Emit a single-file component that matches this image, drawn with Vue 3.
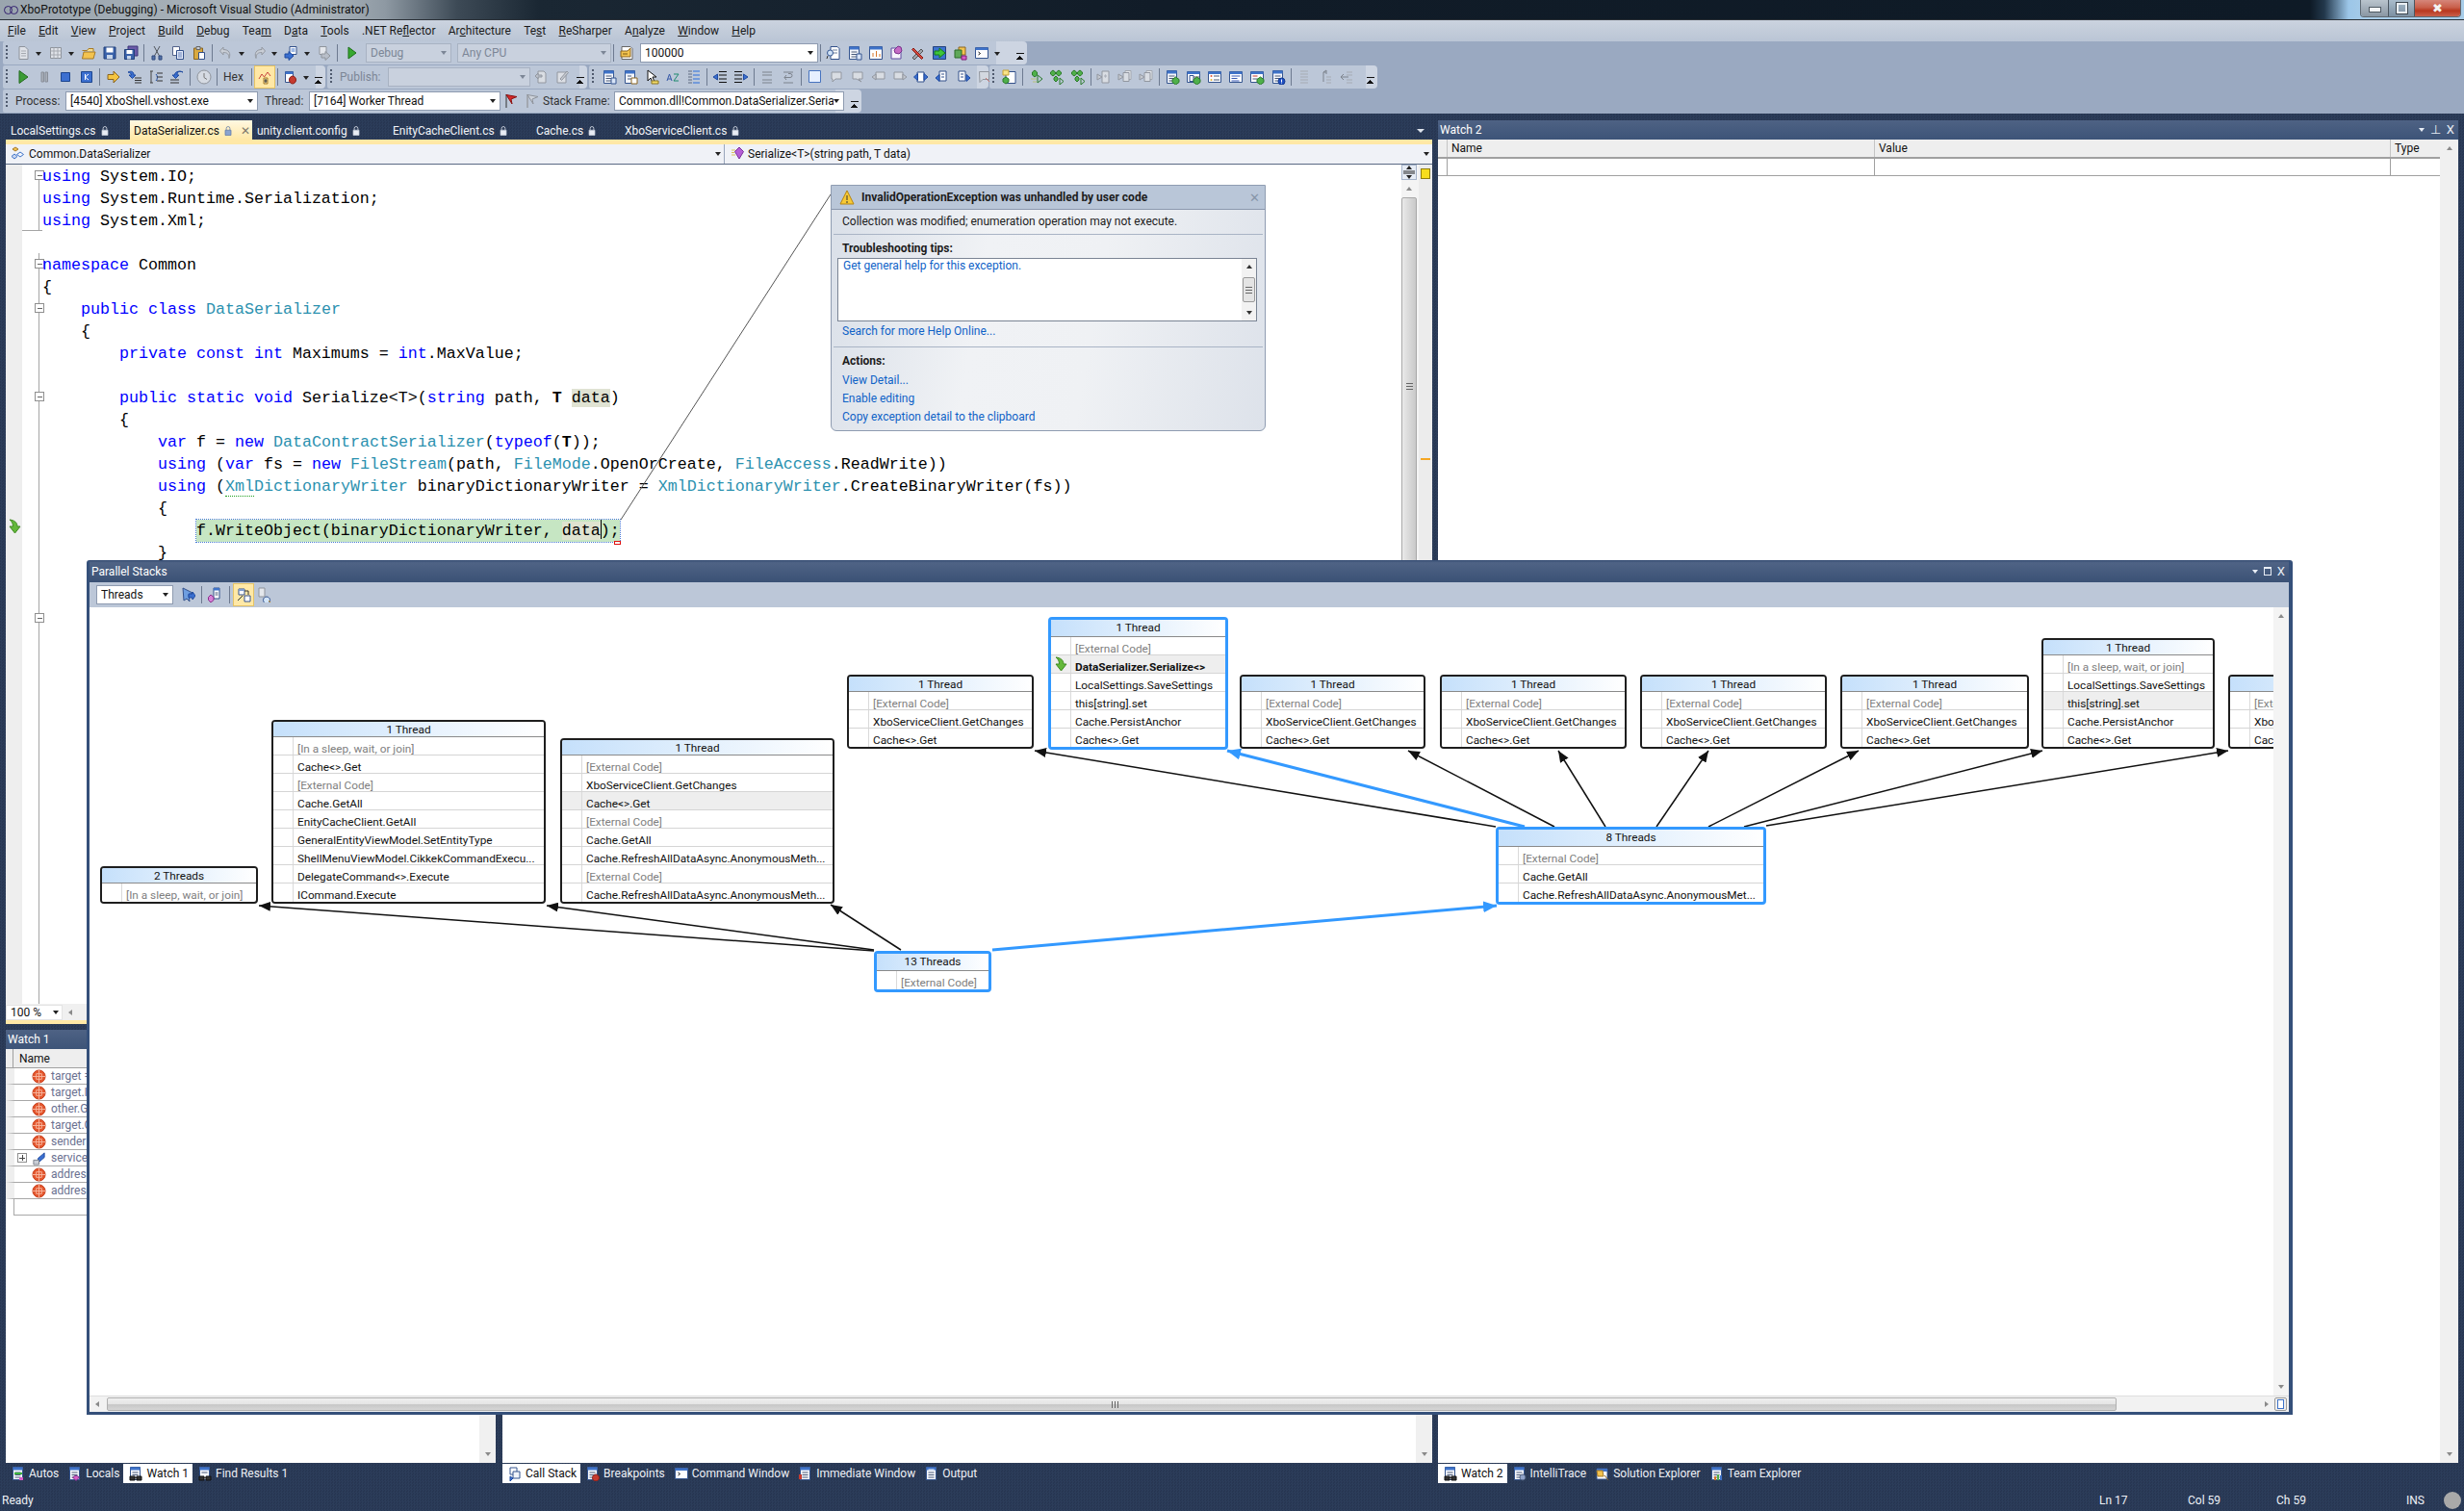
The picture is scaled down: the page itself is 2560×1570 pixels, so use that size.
<script setup>
import { h } from 'vue';

// tiny icon drawing: every icon is a list of [d, fill, stroke]
const list = [
    ['M2.5 1.5h10v13h-10z', '#f4f6fb', '#35558f'],
    ['M2.5 1.5h10v3h-10z', '#3f73c9'],
    ['M4.5 7h6M4.5 9.5h6M4.5 12h6', 'none', '#4a5a78'],
];
const windowBase = [
    ['M1.5 2.5h13v11h-13z', '#fdfdff', '#35558f'],
    ['M1.5 2.5h13v2.5h-13z', '#3f73c9'],
];
const gem = [['M11.5 8l3.5 2.5v3L11.5 16 8 13.5v-3z', '#4fb04a', '#2c7a2a']];
const ball = 'M8 1a7 7 0 1 0 0 14a7 7 0 1 0 0-14z';
const binoculars = [['M2 11h5v4H2zM9 11h5v4H9z', '#333', '#111'], ['M7 12h2v1H7z', '#333']];

const icons = {
    newproj: [['M4 1.5h6l3 3v10H4z', '#dfe2e8', '#8f949c'], ['M6 6h5M6 8.5h5M6 11h5', 'none', '#a5a9b0']],
    additem: [['M2.5 2.5h11v11h-11z', '#dfe2e8', '#8f949c'], ['M2.5 6h11M2.5 10h11M6 2.5v11M10 2.5v11', 'none', '#a5a9b0']],
    open: [['M1.5 5.5h5l1.5-2h5v3', '#f7dd8a', '#a67a26'], ['M1.5 14l1.5-7h12l-2 7z', '#f3c34f', '#a67a26']],
    save: [['M2 2h12v12H2z', '#3a62aa', '#23407a'], ['M4.5 2.5h7v5h-7z', '#fff'], ['M5 10h6v4H5z', '#c8d6ea']],
    saveall: [['M5 1h10v10H5z', '#6a5aa8', '#3d3478'], ['M1.5 4.5h10v10h-10z', '#3a62aa', '#23407a'], ['M3.5 5h6v4h-6z', '#fff'], ['M4 11h4v3.5H4z', '#c8d6ea']],
    cut: [['M5 1l5.5 10M11 1L5.5 11', 'none', '#50555c'], ['M3 11h3v4H3zM10 11h3v4h-3z', '#5574ab', '#2d477a']],
    copy: [['M2.5 1.5h7v9h-7z', '#fff', '#52628a'], ['M6.5 5.5h7v9h-7z', '#e7eefc', '#33508a'], ['M8 8h4M8 10h4M8 12h4', 'none', '#5e7bb5']],
    paste: [['M2.5 3h9v11.5h-9z', '#d9a940', '#8a6420'], ['M5 1.5h4v3H5z', '#c7ccd4', '#666'], ['M7.5 7.5h6v7h-6z', '#fff', '#33508a']],
    undo: [['M5 2L1.5 6 5 10V7.5c4 0 6 1.5 6 6 2-5 0-9-6-9z', '#c9ced6', '#9398a1']],
    redo: [['M11 2l3.5 4L11 10V7.5c-4 0-6 1.5-6 6-2-5 0-9 6-9z', '#c9ced6', '#9398a1']],
    nav: [['M6 1.5h7v8H6z', '#fff', '#33508a'], ['M7.5 4h4M7.5 6h4', 'none', '#3f73c9'], ['M1 9h4V6.5l5 4.5-5 4.5V13H1z', '#3a6fd0', '#1f4aa0']],
    navfwd: [['M3 1.5h7v8H3z', '#e4e7ec', '#8f949c'], ['M5 9h4V6.5l5 4.5-5 4.5V13H5z', '#b9bfc9', '#8f949c']],
    play: [['M4 1.5l9 6.5-9 6.5z', '#3c9c36', '#246a20']],
    playg: [['M5 2l8 6-8 6z', '#36a82f', '#1d6f18']],
    pause: [['M5 3h2.5v10H5zM9 3h2.5v10H9z', '#a9afb9', '#888e98']],
    stop: [['M3.5 3.5h9v9h-9z', '#3c6fd0', '#1c458f']],
    restart: [['M2.5 2.5h11v11h-11z', '#3c6fd0', '#1c458f'], ['M10 5L6.5 8 10 11M6.5 5v6', 'none', '#fff']],
    shownext: [['M2 5.5h6V2l6 6-6 6v-3.5H2z', '#f5c542', '#8a6420']],
    stepin: [['M1 3c4-2 6 0 6 3h2L5.5 9.5 2 6h2.5C4.5 4.5 3 3.5 1 3z', '#3a6fd0', '#1f4aa0'], ['M8 9h7M8 11.5h7M8 14h7', 'none', '#333']],
    stepover: [['M3 2v12M2 2h3M2 14h3', 'none', '#444'], ['M8 5a5 5 0 0 1 0 7', 'none', '#1f4aa0'], ['M9 4h6M9 8h6M9 12h6', 'none', '#333']],
    stepout: [['M14 3c-4-2-6 0-6 3h2L6.5 9.5 3 6h2.5C5.5 3 9 1 14 3z', '#3a6fd0', '#1f4aa0'], ['M1 11h9M1 14h9', 'none', '#333']],
    clock: [[ball, '#d6dbe3', '#8f949c'], ['M8 4v4.5l3 2', 'none', '#777']],
    hexvis: [['M2 10l3-5 2.5 3L11 3l3 4', 'none', '#c9473f'], ['M7 9h4v6H7z', '#e7d9a8', '#a67a26'], ['M9 10v4M7.5 12h3', 'none', '#333']],
    bps: [['M2.5 2.5h8v11h-8z', '#fff', '#33508a'], ['M2.5 2.5h8v2.5h-8z', '#3f73c9'], ['M10 7a3.5 4 0 1 0 0.01 0z', '#c63a2f', '#8a1f18']],
    pubsync: [['M5 2h6l2 2v10H5z', '#d9dde3', '#9297a0'], ['M2 7l3-3v2h4v2H5v2z', '#b9bfc9', '#9297a0']],
    pubcheck: [['M3 3h9v11H3z', '#dcdfe5', '#9297a0'], ['M6 10l7-8 1.5 1.5-7 8z', '#c4c8cf', '#9297a0']],
    attr: [...list, ['M10 9h5v6h-5z', '#d8e4f7', '#35558f']],
    gear: [...list.slice(0, 2), ['M5 7h4M5 10h4', 'none', '#4a5a78'], ['M9 9h6v6H9z', '#ffffff', '#8a6420']],
    cursor: [['M4 1v11l3-3 2 5 2-1-2-5h4z', '#fff', '#111'], ['M8 12h7v3H8z', '#f3dc6a', '#8a7420']],
    az: [['M2 12l2.5-7L7 12M3 10h3', 'none', '#3558a8'], ['M9 5h5l-5 7h5', 'none', '#1e8a6f']],
    indent: [['M2 2h4M2 5h4M2 8h4M2 11h4M2 14h4', 'none', '#5f6b80'], ['M7 2h7M7 6h7M7 10h7M7 14h7', 'none', '#2a6fdc']],
    outdent: [['M7 2.5h8M7 6h8M7 10h8M7 13.5h8', 'none', '#111'], ['M5.5 5L1 8l4.5 3z', '#3a6fd0', '#1f4aa0']],
    outdent2: [['M1 2.5h8M1 6h8M1 10h8M1 13.5h8', 'none', '#111'], ['M10.5 5L15 8l-4.5 3z', '#3a6fd0', '#1f4aa0']],
    lines: [['M3 3h10M3 6h10M3 11h10M3 14h10', 'none', '#7d838d']],
    undoline: [['M3 3h10M3 14h10', 'none', '#7d838d'], ['M6 6l-2 2.5 2 2.5M4 8.5h6a2 2 0 0 0 0-4H8', 'none', '#7d838d']],
    bubble: [['M1.5 1.5h12v12h-12z', '#e7f0ff', '#4773bf']],
    bub1: [['M3 3h10v7H7l-3 3v-3H3z', '#d9dde3', '#9297a0']],
    bub2: [['M3 3h10v7H9l3 3-5-3H3z', '#d9dde3', '#9297a0']],
    bub3: [['M5 3h9v7H5z', '#d9dde3', '#9297a0'], ['M1 8l4-3v6z', '#c4c8cf', '#9297a0']],
    bub4: [['M2 3h9v7H2z', '#d9dde3', '#9297a0'], ['M15 8l-4-3v6z', '#c4c8cf', '#9297a0']],
    bluebm: [['M4 3h7v10H4z', '#fff', '#33508a'], ['M0.5 8l4-3.5v7z', '#3a6fd0', '#1f4aa0'], ['M15 8l-4-3.5v7z', '#3a6fd0', '#1f4aa0']],
    bm1: [['M5 2h7v10H5z', '#fff', '#33508a'], ['M1 9l4-3.5v7z', '#3a6fd0', '#1f4aa0'], ['M7 5h3M7 8h3', 'none', '#33508a']],
    bm2: [['M3 2h7v10H3z', '#fff', '#33508a'], ['M15 9l-4-3.5v7z', '#3a6fd0', '#1f4aa0'], ['M5 5h3M5 8h3', 'none', '#33508a']],
    nobm: [['M2.5 2.5h10v8H6l-3 3z', '#d3d8e0', '#92979f'], ['M9 9l5 5', 'none', '#c2736e']],
    findin: [['M5 1.5h7l2 2v11H5z', '#fff', '#33508a'], ['M7 5h5M7 8h5', 'none', '#6c7e9c'], ['M1.5 8a3 3 0 1 0 6 0a3 3 0 1 0-6 0', '#cfe2f7', '#35558f'], ['M2 11l-1 3', 'none', '#333']],
    props: [['M3 1.5h9l2 2v11H3z', '#fff', '#666'], ['M2 6h7L12 3v9H2z', '#f3c34f', '#8a6420'], ['M4 9h5', 'none', '#7a5a15']],
    toolwin: [['M1.5 1.5h13v13h-13z', '#fff', '#33508a'], ['M1.5 1.5h13v3h-13z', '#3f73c9'], ['M5 12V8M8.5 12V6M12 12V9', 'none', '#d6772b']],
    extmgr: [['M2 3h10v11H2z', '#f7f4fb', '#5f4ba0'], ['M9 1l3 1 1 4-3 3-4-1-1-3z', '#c56bc5', '#7a2f8a']],
    tools: [['M2 13L11 4l2 2-9 9z', '#a0a5ad', '#555'], ['M3 3l10 10-1.5 1.5L1.5 4.5z', '#d24a3f', '#8a1f18']],
    run: [['M1.5 1.5h13v13h-13z', '#3d74d0', '#23407a'], ['M3 6h5V3l6 5-6 5v-3H3z', '#3ec63a', '#1a7a18']],
    archi: [['M6 2h7v8H6z', '#f3c34f', '#8a6420'], ['M2 5h7v8H2z', '#5fa85a', '#2c6a28'], ['M9 11h5v4H9z', '#d65bc7', '#7a1f6f']],
    cmd: [...windowBase, ['M4.5 7l2 1.5-2 1.5', 'none', '#111']],
    flagred: [['M3 1v14', 'none', '#333'], ['M3 1.5l11 2-6 2.5 1 5z', '#d62828', '#8a1212']],
    flaggray: [['M3 1v14', 'none', '#888'], ['M3 1.5l11 2-6 2.5 1 5z', '#cdd2da', '#8f949c']],
    gemdoc: [['M4 2.5h10v12H4z', '#fff', '#33508a'], ['M1 1h6v5H1z', '#f8e488', '#c8a232'], ['M4 8l3 2v3l-3 2-3-2v-3z', '#4fb04a', '#2c7a2a']],
    tree1: [['M7 1l2.5 2v3L7 8 4.5 6V3z', '#4fb04a', '#2c7a2a'], ['M3 10h6M5 13h4', 'none', '#b8c07a'], ['M10 6l5 4-5 4z', 'none', '#2a7a2a']],
    tree2: [['M4 1l2.5 2v2L4 7 1.5 5V3zM10 1l2.5 2v2L10 7 7.5 5V3z', '#4fb04a', '#2c7a2a'], ['M7 7l2 2v2l-2 2-2-2V9z', '#4fb04a', '#2c7a2a'], ['M11 9l4 3.5L11 16z', 'none', '#2a7a2a']],
    disdoc: [['M6 2h7v12H6z', '#d9dde3', '#9297a0'], ['M1 5l5 3-5 3z', '#c4c8cf', '#9297a0'], ['M9.5 5l1.5 2-1.5 2-1.5-2z', '#aeb3bc']],
    disdocs: [['M8 1.5h6v9H8z', '#e2e5ea', '#a3a8b0'], ['M6 3.5h6v9H6z', '#d9dde3', '#9297a0'], ['M1 5l5 3-5 3z', '#c4c8cf', '#9297a0']],
    wingem: [...list, ...gem],
    wingem2: [...windowBase, ['M4 6.5h4v6H4z', 'none', '#35558f'], ['M8 8h6', 'none', '#555'], ...gem],
    winlist: [...windowBase, ['M3.5 7a1 1 0 1 0 2 0a1 1 0 1 0-2 0', '#e05a3a'], ['M3.5 11a1 1 0 1 0 2 0a1 1 0 1 0-2 0', '#e3b136'], ['M7 7h6M7 11h6', 'none', '#4a5a78']],
    winlines: [...windowBase, ['M3.5 7h9M3.5 9.5h6M3.5 12h8', 'none', '#3b5bb5']],
    winred: [...windowBase, ['M3.5 7h5', 'none', '#c63a2f'], ['M3.5 10h5', 'none', '#4a5a78'], ...gem],
    wininfo: [...list, ['M11.5 9a3.5 3.5 0 1 0 0 7a3.5 3.5 0 1 0 0-7z', '#1f4fc2', '#123a90'], ['M11.5 10.5v3M11.5 14.5v.5', 'none', '#fff']],
    fade1: [['M4 2h8M4 5h8M4 8h8M4 11h8M4 14h8', 'none', '#a6abb3']],
    fade2: [['M6 13V3h3M6 3l3-2v4', 'none', '#7d838d'], ['M9 8h5M9 11h5M9 14h5', 'none', '#a6abb3']],
    fade3: [['M2 8h8M5 5L2 8l3 3', 'none', '#7d838d'], ['M8 3h6M8 6h6M8 11h6M8 14h6', 'none', '#a6abb3']],
    lock: [['M5.5 7V4.5a2.5 2.5 0 0 1 5 0V7', 'none', '#e8ecf4'], ['M4 7h8v7H4z', '#e8ecf4', '#c2c9d6']],
    lockact: [['M5.5 7V4.5a2.5 2.5 0 0 1 5 0V7', 'none', '#5f7aa8'], ['M4 7h8v7H4z', '#8aa3cf', '#5f7aa8']],
    cls: [['M5 1l3 2-3 2-3-2z', '#f3c34f', '#a67a26'], ['M10 6l3.5 2.5L10 11 6.5 8.5z', '#f4f6fb', '#3f73c9'], ['M4 8l3 2.5L4 13 1 10.5z', '#c9d6ef', '#3f73c9']],
    method: [['M2 4h4M2 6.5h3M2 9h4', 'none', '#d9c25a'], ['M10 1l4.5 4.5L10 13 5.5 5.5z', '#b55ed6', '#7a2f9a']],
    arrow: [['M3 1c5 0.5 8 3 8 7h3l-5.5 7L3 8h3.5C6.5 5 5.5 3 3 1z', '#63b83a', '#3f8a22']],
    warn: [['M8 1l7 14H1z', '#f7c935', '#b58410'], ['M8 6v5M8 12v2', 'none', '#333']],
    err: [[ball, '#e4572e', '#c8401e'], ['M5 5h6v6H5zM8 1v14M1 8h14', 'none', '#f8b8a0']],
    service: [['M7 8l7-6v5l-7 6z', '#3a6fd0', '#1f4aa0'], ['M2 10h6v5H2z', '#c9ced6', '#7d838d']],
    filterflag: [['M3 1l10 5-4 2 1 7-3-3-3 2z', '#6e9ee0', '#33508a'], ['M9 7h4V5l3 4-3 4v-2H9z', '#3a6fd0', '#1f4aa0']],
    stackdoc: [['M6 1h6v11H6z', '#fff', '#33508a'], ['M6 1h6v2.5H6z', '#3f73c9'], ['M7.5 6h3M7.5 8h3', 'none', '#4a5a78'], ['M3 8l3 2.5v3L3 16l-2.5-2.5v-3z', '#d67fd6', '#8a2f8a']],
    method2: [['M3 2h6v6H3z', '#fff', '#33508a'], ['M3 2h6v2H3z', '#7f9dd0'], ['M9 9h6v6H9z', '#fff', '#33508a'], ['M9 4l4 0v4M2 14l5-5', 'none', '#333']],
    zoomfit: [['M2 1h6v9H2z', '#e4e7ec', '#8f949c'], ['M10 10a3.5 3.5 0 1 0 0.01 0z', '#d2e4f7', '#35558f'], ['M12 14l2 2', 'none', '#c28a2c']],
    autos: [...list, ['M4 7h8v2H4z', '#3cb53c'], ['M9 12h4v3H9z', '#d65bc7']],
    locals: [...list, ['M9 10l3.5 2-3.5 3.5L5.5 12z', '#d65bc7', '#7a2f8a']],
    watch: [...list, ...binoculars],
    findres: [...list.slice(0, 2), ['M4.5 7h6', 'none', '#4a5a78'], ...binoculars],
    callstack: [['M3 2h7v7H3z', '#fff', '#35558f'], ['M6 6h7v7H6z', '#f0f3f9', '#35558f'], ['M3 11l3 2-3 3z', '#3a6fd0', '#1f4aa0']],
    breakpoints: [...list, ['M11 9a3.5 3.5 0 1 0 0.01 0z', '#c63a2f', '#8a1f18']],
    immediate: [...list, ['M1 9h3v5H1z', '#c63a2f']],
    output: [...list, ['M4.5 4h6', 'none', '#fff']],
    intelli: [...list, ['M11 9a3 3 0 1 0 0.01 0z', '#8fa2c8', '#4a5a78']],
    solution: [['M2 3h11v11H2z', '#fff', '#35558f'], ['M2 3h11v3H2z', '#3f73c9'], ['M2 5h6l1 6H3z', '#f3c34f', '#a67a26'], ['M10 10l4 5', 'none', '#8a6420']],
    team: [...list, ['M5 11h2v4H5z', '#d6772b'], ['M8 9h2v6H8z', '#4fb04a'], ['M11 10h2v5h-2z', '#3f73c9']],
};

const Ico = ({ name }) => h('svg', { viewBox: '0 0 16 16', width: 16, height: 16 },
    (icons[name] || []).map(p => h('path', { d: p[0], fill: p[1] || 'none', stroke: p[2] || 'none' })));
Ico.props = ['name'];

const combo = (text, width, off) => ({ kind: 'combo', text, width, off });
const label = (text, width, off) => ({ kind: 'label', text, width, off });
const strip = s => s.split(' ');

const toolbarRows = [
    [{ width: 1064, items: [
        ...strip('newproj a additem a open save saveall | cut copy paste || undo a redo a nav a navfwd || playg'),
        { kind: 'gap', width: 4 }, combo('Debug', 89, true), { kind: 'gap', width: 6 }, combo('Any CPU', 160, true),
        ...strip('| props'), { kind: 'gap', width: 3 }, combo('100000', 185), ...strip('| findin attr toolwin extmgr tools run archi cmd a chev'),
    ] }],
    [
        { width: 335, items: [...strip('play pause stop restart || shownext stepin stepover stepout || clock |'), { kind: 'gap', width: 4 }, label('Hex', 27), ...strip('| on:hexvis | bps a chev')] },
        { width: 270, items: [label('Publish:', 46, true), { kind: 'gap', width: 4 }, combo('', 148, true), ...strip('pubsync pubcheck chev')] },
        { width: 415, items: strip('attr gear cursor az indent | outdent outdent2 | lines undoline || bubble bub1 bub2 bub3 bub4 bluebm bm1 bm2 nobm chev') },
        { width: 403, items: strip('gemdoc | tree1 tree2 tree2 | disdoc disdocs disdocs | wingem wingem2 winlist winlines winred wininfo | fade1 fade2 fade3 chev') },
    ],
    [{ width: 892, items: [
        { kind: 'gap', width: 3 }, label('Process:', 46), { kind: 'gap', width: 6 }, combo('[4540] XboShell.vshost.exe', 200),
        { kind: 'gap', width: 7 }, label('Thread:', 39), { kind: 'gap', width: 7 }, combo('[7164] Worker Thread', 199),
        ...strip('flagred flaggray'), label('Stack Frame:', 70), { kind: 'gap', width: 4 }, combo('Common.dll!Common.DataSerializer.Seria', 239), 'chev',
    ] }],
];

const menu = [
    ['', 'F', 'ile'], ['', 'E', 'dit'], ['', 'V', 'iew'], ['', 'P', 'roject'], ['', 'B', 'uild'], ['', 'D', 'ebug'],
    ['Tea', 'm', ''], ['D', 'a', 'ta'], ['', 'T', 'ools'], ['.NET Re', 'f', 'lector'], ['Ar', 'c', 'hitecture'],
    ['Te', 's', 't'], ['', 'R', 'eSharper'], ['A', 'n', 'alyze'], ['', 'W', 'indow'], ['', 'H', 'elp'],
];

const docTabs = [
    { name: 'LocalSettings.cs', width: 123 },
    { name: 'DataSerializer.cs', width: 127, active: true },
    { name: 'unity.client.config', width: 141 },
    { name: 'EnityCacheClient.cs', width: 149 },
    { name: 'Cache.cs', width: 92 },
    { name: 'XboServiceClient.cs', width: 130 },
];

const k = s => [s, 'k'];
const t = s => [s, 't'];
const code = [
    [k('using'), ' System.IO;'],
    [k('using'), ' System.Runtime.Serialization;'],
    [k('using'), ' System.Xml;'],
    [],
    [k('namespace'), ' Common'],
    ['{'],
    ['    ', k('public class'), ' ', t('DataSerializer')],
    ['    {'],
    ['        ', k('private const int'), ' Maximums = ', k('int'), '.MaxValue;'],
    [],
    ['        ', k('public static void'), ' Serialize<T>(', k('string'), ' path, ', ['T', 'b'], ' ', ['data', 'hl'], ')'],
    ['        {'],
    ['            ', k('var'), ' f = ', k('new'), ' ', t('DataContractSerializer'), '(', k('typeof'), '(', ['T', 'b'], '));'],
    ['            ', k('using'), ' (', k('var'), ' fs = ', k('new'), ' ', t('FileStream'), '(path, ', t('FileMode'), '.OpenOrCreate, ', t('FileAccess'), '.ReadWrite))'],
    ['            ', k('using'), ' (', ['Xml', 't squig'], t('DictionaryWriter'), ' binaryDictionaryWriter = ', t('XmlDictionaryWriter'), '.CreateBinaryWriter(fs))'],
    ['            {'],
    null, // current statement, written out in the template
    ['            }'],
].map(line => line && line.map(seg => (typeof seg === 'string' ? [seg, ''] : seg)));
const currentIndent = ' '.repeat(16);

// fold margin, one entry per line
const foldBoxes = [1, 5, 7, 11, 21];
const gutter = Array.from({ length: 38 }, (_, i) => {
    const n = i + 1;
    if (foldBoxes.includes(n)) return 'box';
    if (n === 3) return 'end';
    if (n === 4) return '';
    return 'line';
});

const watchRows = [
    ['err', 'target = '], ['err', 'target.Id'], ['err', 'other.GetType'], ['err', 'target.GetType'],
    ['err', 'sender'], ['service', 'serviceClient'], ['err', 'address'], ['err', 'address'],
];

const leftTabs = [
    { icon: 'autos', text: 'Autos' }, { icon: 'locals', text: 'Locals' },
    { icon: 'watch', text: 'Watch 1', active: true }, { icon: 'findres', text: 'Find Results 1' },
];
const midTabs = [
    { icon: 'callstack', text: 'Call Stack', active: true }, { icon: 'breakpoints', text: 'Breakpoints' },
    { icon: 'cmd', text: 'Command Window' }, { icon: 'immediate', text: 'Immediate Window' }, { icon: 'output', text: 'Output' },
];
const rightTabs = [
    { icon: 'watch', text: 'Watch 2', active: true }, { icon: 'intelli', text: 'IntelliTrace' },
    { icon: 'solution', text: 'Solution Explorer' }, { icon: 'team', text: 'Team Explorer' },
];

// parallel stacks diagram, all in page pixels
const ORIGIN_X = 93;
const ORIGIN_Y = 631;
const CANVAS_W = 2269;
const CANVAS_H = 819;

const EXT = '[External Code]';
const SLEEP = '[In a sleep, wait, or join]';
const GET = 'Cache<>.Get';
const CHANGES = 'XboServiceClient.GetChanges';
const threeRows = [EXT, CHANGES, GET];

const nodes = [
    { x: 104, y: 900, w: 164, title: '2 Threads', rows: [SLEEP] },
    { x: 282, y: 748, w: 285, title: '1 Thread', rows: [SLEEP, GET, EXT, 'Cache.GetAll', 'EnityCacheClient.GetAll', 'GeneralEntityViewModel.SetEntityType', 'ShellMenuViewModel.CikkekCommandExecu...', 'DelegateCommand<>.Execute', 'ICommand.Execute'] },
    { x: 582, y: 767, w: 285, title: '1 Thread', hl: 2, rows: [EXT, CHANGES, GET, EXT, 'Cache.GetAll', 'Cache.RefreshAllDataAsync.AnonymousMeth...', EXT, 'Cache.RefreshAllDataAsync.AnonymousMeth...'] },
    { x: 880, y: 701, w: 194, title: '1 Thread', rows: threeRows },
    { x: 1089, y: 641, w: 187, title: '1 Thread', blue: true, current: 1, rows: [EXT, 'DataSerializer.Serialize<>', 'LocalSettings.SaveSettings', 'this[string].set', 'Cache.PersistAnchor', GET] },
    { x: 1288, y: 701, w: 193, title: '1 Thread', rows: threeRows },
    { x: 1496, y: 701, w: 194, title: '1 Thread', rows: threeRows },
    { x: 1704, y: 701, w: 194, title: '1 Thread', rows: threeRows },
    { x: 1912, y: 701, w: 196, title: '1 Thread', rows: threeRows },
    { x: 2121, y: 663, w: 180, title: '1 Thread', hl: 2, rows: [SLEEP, 'LocalSettings.SaveSettings', 'this[string].set', 'Cache.PersistAnchor', GET] },
    { x: 2315, y: 701, w: 194, title: '1 Thread', rows: threeRows },
    { x: 1554, y: 859, w: 281, title: '8 Threads', blue: true, rows: [EXT, 'Cache.GetAll', 'Cache.RefreshAllDataAsync.AnonymousMet...'] },
    { x: 908, y: 988, w: 122, title: '13 Threads', blue: true, rows: [EXT] },
];

const links = [
    [908, 988, 269, 941], [908, 987, 568, 941], [936, 987, 863, 940],
    [1554, 859, 1075, 780], [1615, 859, 1463, 780], [1668, 859, 1619, 780], [1721, 859, 1775, 780],
    [1775, 859, 1931, 780], [1812, 859, 2122, 780], [1835, 858, 2315, 780],
];
const blueLinks = [[1031, 987, 1555, 941], [1584, 859, 1275, 780]];
</script>

<template>
    <div class="ide">
        <div class="titlebar">
            <span class="app-logo"><i></i><i></i></span>
            <span class="title-text">XboPrototype (Debugging) - Microsoft Visual Studio (Administrator)</span>
            <div class="caption">
                <span class="cap cap-min"><i></i></span>
                <span class="cap cap-max"><i></i></span>
                <span class="cap cap-close">✖</span>
            </div>
        </div>

        <nav class="menubar">
            <span v-for="m in menu" :key="m.join('')" class="menu-item">{{ m[0] }}<u>{{ m[1] }}</u>{{ m[2] }}</span>
        </nav>

        <div class="toolbars">
            <div v-for="(row, r) in toolbarRows" :key="r" class="tray-row">
                <div v-for="(tray, i) in row" :key="i" class="tray" :style="{ width: tray.width + 'px' }">
                    <i class="grip"></i>
                    <template v-for="(item, j) in tray.items" :key="j">
                        <i v-if="item === '|'" class="sep"></i>
                        <i v-else-if="item === '||'" class="sep sep-wide"></i>
                        <i v-else-if="item === 'a'" class="drop"></i>
                        <i v-else-if="item === 'chev'" class="chev"></i>
                        <i v-else-if="item.kind === 'gap'" :style="{ width: item.width + 'px' }"></i>
                        <span v-else-if="item.kind === 'label'" class="tray-label" :class="{ off: item.off }" :style="{ width: item.width + 'px' }">{{ item.text }}</span>
                        <span v-else-if="item.kind === 'combo'" class="combo" :class="{ off: item.off }" :style="{ width: item.width + 'px' }">
                            <span class="combo-text">{{ item.text }}</span><i class="tri"></i>
                        </span>
                        <span v-else class="btn" :class="{ on: item.startsWith('on:') }"><Ico :name="item.replace('on:', '')" /></span>
                    </template>
                </div>
            </div>
        </div>

        <div class="workspace">
            <div class="left-col">
                <section class="doc">
                    <div class="doc-tabs">
                        <span v-for="tab in docTabs" :key="tab.name" class="doc-tab" :class="{ active: tab.active }" :style="{ width: tab.width + 'px' }">
                            {{ tab.name }}<Ico class="tab-lock" :name="tab.active ? 'lockact' : 'lock'" />
                            <span v-if="tab.active" class="tab-x">✕</span>
                        </span>
                        <i class="tabs-menu"></i>
                    </div>
                    <div class="navbar">
                        <div class="nav-cell nav-first"><Ico name="cls" /><span>Common.DataSerializer</span><i class="tri"></i></div>
                        <div class="nav-cell nav-second"><Ico name="method" /><span>Serialize&lt;T&gt;(string path, T data)</span><i class="tri"></i></div>
                    </div>

                    <div class="editor">
                        <div class="glyph-margin"><Ico class="exec-arrow" name="arrow" /></div>
                        <div class="fold-margin">
                            <div v-for="(f, i) in gutter" :key="i" class="fold-row" :class="f"><i v-if="f === 'box'"></i></div>
                        </div>
                        <div class="code">
                            <div v-for="(line, i) in code" :key="i" class="code-line">
                                <template v-if="line">
                                    <span v-for="(seg, j) in line" :key="j" :class="seg[1]">{{ seg[0] }}</span>
                                </template>
                                <template v-else>
                                    <span>{{ currentIndent }}</span><span class="current">f.WriteObject(binaryDictionaryWriter, <span class="cur-data">data</span><i class="text-caret"></i>);<i class="err-box"></i></span>
                                </template>
                            </div>
                        </div>
                        <div class="ed-scroll">
                            <span class="splitter">
                                <svg width="14" height="14" viewBox="0 0 14 14"><path d="M1 6h12M1 8h12" stroke="#222" fill="none" /><path d="M7 0l3 4H4zM7 14l3-4H4z" fill="#222" /></svg>
                            </span>
                            <i class="arrow-up"></i>
                            <span class="ed-thumb"><i class="thumb-grip"></i></span>
                        </div>
                        <div class="markers"><i class="mark-yellow"></i><i class="mark-orange"></i></div>

                        <svg class="leader" width="880" height="400"><line x1="857" y1="31" x2="639" y2="369" stroke="#555" /></svg>

                        <aside class="balloon">
                            <header class="bl-head">
                                <Ico name="warn" />
                                <strong>InvalidOperationException was unhandled by user code</strong>
                                <span class="bl-close">✕</span>
                            </header>
                            <p class="bl-msg">Collection was modified; enumeration operation may not execute.</p>
                            <div class="bl-section">
                                <h4>Troubleshooting tips:</h4>
                                <div class="bl-tips">
                                    <a>Get general help for this exception.</a>
                                    <div class="bl-scroll"><i class="arrow-up"></i><span class="bl-thumb"><i class="thumb-grip"></i></span><i class="arrow-down"></i></div>
                                </div>
                                <a class="bl-more">Search for more Help Online...</a>
                            </div>
                            <div class="bl-section bl-actions">
                                <h4>Actions:</h4>
                                <a>View Detail...</a>
                                <a>Enable editing</a>
                                <a>Copy exception detail to the clipboard</a>
                            </div>
                        </aside>
                    </div>

                    <div class="zoombar">
                        <span class="zoom-combo">100 %<i class="tri"></i></span>
                        <i class="arrow-left"></i>
                    </div>
                    <div class="doc-foot"></div>
                </section>

                <div class="lower">
                    <div class="tool-col watch1-col">
                        <section class="panel">
                            <header class="panel-title">Watch 1</header>
                            <div class="panel-body">
                                <div class="watch-body">
                                    <div class="wt-head"><i></i><span>Name</span></div>
                                    <div v-for="(row, i) in watchRows" :key="i" class="wt-row">
                                        <span class="wt-exp"><i v-if="row[0] === 'service'"></i></span>
                                        <Ico :name="row[0]" /><span>{{ row[1] }}</span>
                                    </div>
                                    <div class="wt-row wt-empty"></div>
                                </div>
                                <div class="side-scroll"><i class="arrow-down"></i></div>
                            </div>
                        </section>
                        <div class="tool-tabs">
                            <span v-for="tab in leftTabs" :key="tab.text" class="tool-tab" :class="{ active: tab.active }"><Ico :name="tab.icon" />{{ tab.text }}</span>
                        </div>
                    </div>
                    <div class="tool-col callstack-col">
                        <section class="panel">
                            <header class="panel-title">Call Stack</header>
                            <div class="panel-body">
                                <div class="watch-body"></div>
                                <div class="side-scroll"><i class="arrow-down"></i></div>
                            </div>
                        </section>
                        <div class="tool-tabs">
                            <span v-for="tab in midTabs" :key="tab.text" class="tool-tab" :class="{ active: tab.active }"><Ico :name="tab.icon" />{{ tab.text }}</span>
                        </div>
                    </div>
                </div>
            </div>

            <div class="tool-col right-col">
                <section class="panel">
                    <header class="panel-title">
                        Watch 2
                        <span class="panel-btns"><i class="tri tri-white"></i><b>⊥</b><b>X</b></span>
                    </header>
                    <div class="panel-body">
                        <div class="w2-grid">
                            <div class="w2-row w2-head"><i></i><span>Name</span><span>Value</span><span>Type</span></div>
                            <div class="w2-row w2-empty"><i></i><span></span><span></span><span></span></div>
                        </div>
                        <div class="side-scroll w2-scroll"><i class="arrow-up"></i><i class="arrow-down"></i></div>
                    </div>
                </section>
                <div class="tool-tabs">
                    <span v-for="tab in rightTabs" :key="tab.text" class="tool-tab" :class="{ active: tab.active }"><Ico :name="tab.icon" />{{ tab.text }}</span>
                </div>
            </div>
        </div>

        <footer class="statusbar">
            <span class="st-ready">Ready</span>
            <span class="st-ln">Ln 17</span>
            <span class="st-col">Col 59</span>
            <span class="st-ch">Ch 59</span>
            <span class="st-ins">INS</span>
            <i class="st-dot"></i>
        </footer>

        <!-- floating tool window -->
        <section class="stacks-win">
            <header class="win-title">
                Parallel Stacks
                <span class="panel-btns"><i class="tri tri-white"></i><b class="win-max"></b><b>X</b></span>
            </header>
            <div class="win-tools">
                <span class="combo win-combo"><span class="combo-text">Threads</span><i class="tri"></i></span>
                <span class="btn"><Ico name="filterflag" /></span>
                <i class="sep"></i>
                <span class="btn"><Ico name="stackdoc" /></span>
                <i class="sep"></i>
                <span class="btn on"><Ico name="method2" /></span>
                <span class="btn"><Ico name="zoomfit" /></span>
            </div>
            <div class="win-mid">
                <div class="canvas">
                    <svg class="links" :width="CANVAS_W" :height="CANVAS_H" :viewBox="`${ORIGIN_X} ${ORIGIN_Y} ${CANVAS_W} ${CANVAS_H}`">
                        <defs>
                            <marker id="head-black" markerUnits="userSpaceOnUse" markerWidth="12" markerHeight="10" refX="12" refY="5" orient="auto">
                                <path d="M0 0L12 5L0 10z" fill="#111" />
                            </marker>
                            <marker id="head-blue" markerUnits="userSpaceOnUse" markerWidth="14" markerHeight="12" refX="14" refY="6" orient="auto">
                                <path d="M0 0L14 6L0 12z" fill="#3399ff" />
                            </marker>
                        </defs>
                        <line v-for="(l, i) in links" :key="i" :x1="l[0]" :y1="l[1]" :x2="l[2]" :y2="l[3]" stroke="#111" stroke-width="1.5" marker-end="url(#head-black)" />
                        <line v-for="(l, i) in blueLinks" :key="'b' + i" :x1="l[0]" :y1="l[1]" :x2="l[2]" :y2="l[3]" stroke="#3399ff" stroke-width="3" marker-end="url(#head-blue)" />
                    </svg>
                    <div v-for="(n, i) in nodes" :key="i" class="node" :class="{ blue: n.blue }"
                         :style="{ left: n.x - ORIGIN_X + 'px', top: n.y - ORIGIN_Y + 'px', width: n.w + 'px' }">
                        <div class="node-head">{{ n.title }}</div>
                        <div v-for="(row, j) in n.rows" :key="j" class="node-row"
                             :class="{ ext: row.startsWith('['), hl: n.hl === j || n.current === j, cur: n.current === j }">
                            <span class="node-mark"><Ico v-if="n.current === j" name="arrow" /></span>
                            <span class="node-text">{{ row }}</span>
                        </div>
                    </div>
                </div>
                <div class="win-vscroll"><i class="arrow-up"></i><i class="arrow-down"></i></div>
            </div>
            <div class="win-hscroll">
                <i class="arrow-left"></i>
                <span class="h-thumb"><i></i></span>
                <i class="arrow-right"></i>
                <span class="corner"><i></i></span>
            </div>
        </section>
    </div>
</template>

<style>
body {
    margin: 0;
    background: #293955;
}
</style>

<style scoped>
.ide {
    position: relative;
    width: 2560px;
    height: 1570px;
    overflow: hidden;
    display: flex;
    flex-direction: column;
    font: 12px Roboto, "Liberation Sans", sans-serif;
    color: #111;
    background: #293955 repeating-conic-gradient(#2c3d5a 0 25%, #273652 0 50%) 0 0 / 3px 3px;
}

i {
    display: block;
    flex: none;
}

/* title bar */
.titlebar {
    height: 20px;
    border-bottom: 1px solid #2b3138;
    display: flex;
    align-items: center;
    flex: none;
    background: linear-gradient(90deg, #9aa5ae 0, #adb6bd 330px, #8e99a3 400px, #3d4a56 475px, #1a2733 560px, #111c28 1200px, #0e1a26 2400px, #23384c 2415px, #9cc6e8 2440px, #a8cde9 2460px);
}

.app-logo {
    display: flex;
    margin-left: 4px;
    width: 14px;
}

.app-logo i {
    width: 7px;
    height: 7px;
    border: 1.5px solid #33206f;
    border-radius: 50%;
    margin-right: -3px;
}

.title-text {
    margin-left: 3px;
    letter-spacing: 0.05px;
}

.caption {
    margin-left: auto;
    margin-right: 3px;
    display: flex;
    height: 17px;
    align-self: flex-start;
    border: 1px solid #5e6972;
    border-top: 0;
    border-radius: 0 0 4px 4px;
    overflow: hidden;
}

.cap {
    display: flex;
    align-items: center;
    justify-content: center;
    height: 17px;
}

.cap-min {
    width: 28px;
    background: linear-gradient(#b9c4cd, #8a97a3);
    border-right: 1px solid #4b5660;
}

.cap-min i {
    width: 11px;
    height: 4px;
    margin-top: 3px;
    background: #f2f4f6;
    border: 1px solid #4f5a63;
}

.cap-max {
    width: 26px;
    background: linear-gradient(#a9bccb, #7c90a2);
    border-right: 1px solid #4b5660;
}

.cap-max i {
    width: 7px;
    height: 7px;
    border: 2px solid #e9eef2;
    outline: 1px solid #3f4952;
}

.cap-close {
    width: 47px;
    color: #f4f4f4;
    font-size: 13px;
    background: linear-gradient(#d5867a, #c9604b 45%, #b8381f 65%, #c9604b);
}

/* menu */
.menubar {
    height: 22px;
    flex: none;
    display: flex;
    align-items: center;
    padding-left: 8px;
    gap: 13.3px;
    background: linear-gradient(#cbd3df, #bac5d5);
    color: #1a1a1a;
}

.toolbars {
    height: 75px;
    flex: none;
    padding-left: 3px;
    background: #9aa9c1;
}

.tray-row {
    display: flex;
    height: 24px;
    margin-bottom: 1px;
    gap: 2px;
}

.tray-row:nth-child(2) .tray:nth-child(4) {
    margin-left: -1px;
}

.tray {
    display: flex;
    align-items: center;
    background: linear-gradient(90deg, #bcc7d8 97%, #cdd5e2 97%);
    border-radius: 2px 4px 4px 2px;
    color: #333;
}

.grip {
    width: 10px;
    height: 16px;
    background: radial-gradient(circle at 1px 1px, #4f5a6e 1px, transparent 1.3px) 3px 0 / 3px 4px repeat-y;
}

.btn {
    flex: none;
    width: 22px;
    height: 24px;
    display: flex;
    align-items: center;
    justify-content: center;
}

.btn.on {
    background: #ffe8a6;
    border: 1px solid #e5c365;
    box-sizing: border-box;
}

.sep {
    width: 1px;
    height: 18px;
    margin: 0 2px;
    background: #6d7a90;
}

.sep-wide {
    margin: 0 3px 0 2px;
}

.drop {
    width: 12px;
    height: 3px;
    position: relative;
}

.drop::after,
.tri {
    content: "";
    width: 0;
    height: 0;
    border: 3.5px solid transparent;
    border-top: 4px solid #222;
    border-bottom: 0;
}

.drop::after {
    position: absolute;
    left: 2px;
    top: 0;
}

.tri-white {
    border-top-color: #e8edf5;
}

.chev {
    width: 8px;
    height: 6px;
    margin: 6px 3px 0 auto;
    border-top: 1px solid #111;
    background: linear-gradient(135deg, transparent 50%, #111 50%) 0 2px / 4px 4px no-repeat, linear-gradient(225deg, transparent 50%, #111 50%) 4px 2px / 4px 4px no-repeat;
}

.tray-label {
    flex: none;
    white-space: nowrap;
}

.tray-label.off {
    color: #7c8696;
    padding-left: 3px;
}

.combo {
    flex: none;
    box-sizing: border-box;
    height: 20px;
    display: flex;
    align-items: center;
    padding: 0 4px;
    background: #fff;
    border: 1px solid #8e9bb0;
    color: #111;
}

.combo.off {
    background: #c9d1de;
    border-color: #a8b2c2;
    color: #7c8696;
}

.combo.off .tri {
    border-top-color: #7c8696;
}

.combo-text {
    flex: 1;
    min-width: 0;
    overflow: hidden;
    white-space: nowrap;
}

/* layout */
.workspace {
    height: 1423px;
    flex: none;
    padding-left: 6px;
    display: grid;
    grid-template-columns: 1482px 1060px;
    column-gap: 6px;
}

.left-col {
    display: flex;
    flex-direction: column;
    min-height: 0;
}

.doc {
    height: 946px;
    flex: none;
    display: flex;
    flex-direction: column;
}

.doc-tabs {
    height: 20px;
    margin-top: 7px;
    display: flex;
    flex: none;
    align-items: stretch;
    color: #f2f4f8;
    padding-left: 5px;
    position: relative;
}

.doc-tab {
    flex: none;
    display: flex;
    align-items: center;
    box-sizing: border-box;
    white-space: nowrap;
    padding-top: 1px;
}

.doc-tab.active {
    background: linear-gradient(#fff8e2, #ffe8a6);
    color: #111;
    margin-left: 1px;
    padding-left: 4px;
}

.doc-tab:not(.active):not(:first-child) {
    padding-left: 5px;
}

.tab-lock {
    width: 12px;
    height: 14px;
    margin-left: 3px;
}

.tab-x {
    margin-left: 7px;
    color: #7e7a6c;
    font-size: 12px;
}

.tabs-menu {
    position: absolute;
    right: 8px;
    top: 9px;
    width: 0;
    border: 4px solid transparent;
    border-top: 4px solid #dfe4ec;
    border-bottom: 0;
}

.doc-foot {
    height: 4px;
    background: #ffe8a6;
}

.navbar {
    flex: none;
    height: 20px;
    border-top: 5px solid #ffe8a6;
    display: flex;
    background: #f0f2f7;
    border-bottom: 1px solid #5a6a84;
}

.nav-cell {
    display: flex;
    align-items: center;
    gap: 3px;
    padding-left: 5px;
}

.nav-cell .tri {
    margin-left: auto;
    margin-right: 3px;
}

.nav-first {
    width: 741px;
    border-right: 1px solid #9aa7bc;
}

.nav-second {
    flex: 1;
}

.editor {
    flex: 1;
    min-height: 0;
    position: relative;
    display: flex;
    background: #fff;
    overflow: hidden;
}

.glyph-margin {
    width: 17px;
    flex: none;
    background: #eeeeee;
    position: relative;
}

.exec-arrow {
    position: absolute;
    left: 1px;
    top: 368px;
}

.fold-margin {
    width: 21px;
    flex: none;
}

.fold-row {
    height: 23px;
    position: relative;
    box-sizing: border-box;
}

.fold-row.line::before,
.fold-row.end::before,
.fold-row.box::before {
    content: "";
    position: absolute;
    left: 17px;
    top: 0;
    bottom: 0;
    border-left: 1px solid #a5a5a5;
}

.fold-row:first-child::before {
    top: 11px;
}

.fold-row.end {
    border-bottom: 1px solid #a5a5a5;
}

.fold-row.box i {
    position: absolute;
    left: 13px;
    top: 6px;
    width: 8px;
    height: 8px;
    background: linear-gradient(#666, #666) center / 5px 1px no-repeat #fff;
    border: 1px solid #8f8f8f;
}

.code {
    flex: 1;
    min-width: 0;
    padding-top: 1px;
    font: 16.66px/23px "Liberation Mono", monospace;
    color: #000;
    overflow: hidden;
}

.code-line {
    height: 23px;
    white-space: pre;
    position: relative;
}

.k {
    color: #0000ff;
}

.t {
    color: #2b91af;
}

.b {
    font-weight: bold;
}

.hl {
    background: #e0e3d3;
}

.squig {
    border-bottom: 1px dotted #1b9e1b;
}

.current {
    position: relative;
    display: inline-block;
    height: 23px;
    background: #c6e6c3;
    outline: 1px dotted #4a7bd6;
}

.cur-data {
    background: #dfe3d0;
}

.text-caret {
    display: inline-block;
    width: 1px;
    height: 20px;
    vertical-align: -4px;
    background: #000;
    margin-right: -1px;
}

.err-box {
    position: absolute;
    right: -1px;
    bottom: -3px;
    width: 5px;
    height: 2px;
    border: 1px solid #e01010;
    background: #fff;
}

.ed-scroll {
    width: 18px;
    flex: none;
    background: #f4f4f4;
    display: flex;
    flex-direction: column;
    align-items: flex-start;
}

.splitter {
    width: 16px;
    height: 16px;
    flex: none;
    background: #e6ecf5;
    border: 1px solid #a5b3c9;
    box-sizing: border-box;
    display: flex;
    align-items: center;
    justify-content: center;
}

.arrow-up,
.arrow-down {
    width: 0;
    height: 0;
    margin: 7px auto;
    border-left: 3px solid transparent;
    border-right: 3px solid transparent;
}

.ed-scroll .arrow-up {
    margin-left: 5px;
}

.arrow-up {
    border-bottom: 4px solid #8a8a8a;
}

.arrow-down {
    border-top: 4px solid #8a8a8a;
}

.arrow-left,
.arrow-right {
    width: 0;
    height: 0;
    border-top: 3px solid transparent;
    border-bottom: 3px solid transparent;
}

.arrow-left {
    border-right: 4px solid #8a8a8a;
}

.arrow-right {
    border-left: 4px solid #8a8a8a;
}

.ed-thumb {
    width: 16px;
    height: 392px;
    flex: none;
    box-sizing: border-box;
    border: 1px solid #a9a9a9;
    border-radius: 2px;
    background: linear-gradient(90deg, #e9e9e9, #c9c9c9);
    display: flex;
    align-items: center;
    justify-content: center;
}

.thumb-grip {
    width: 7px;
    height: 7px;
    background: repeating-linear-gradient(#666 0 1px, transparent 1px 3px);
}

.markers {
    width: 14px;
    flex: none;
    background: #ececec;
    position: relative;
}

.mark-yellow {
    position: absolute;
    left: 2px;
    top: 4px;
    width: 10px;
    height: 11px;
    background: #f7dd1e;
    border: 1px solid #8f7d10;
    box-sizing: border-box;
}

.mark-orange {
    position: absolute;
    left: 2px;
    top: 305px;
    width: 10px;
    height: 2px;
    background: #f5a623;
}

.leader {
    position: absolute;
    left: 0;
    top: 0;
    pointer-events: none;
}

/* exception helper */
.balloon {
    position: absolute;
    left: 857px;
    top: 21px;
    width: 452px;
    height: 256px;
    box-sizing: border-box;
    border: 1px solid #8f9cb1;
    border-radius: 0 0 6px 6px;
    background: linear-gradient(100deg, #d9dfe8 0, #f0f2f5 35%, #eff1f4 60%, #dde2ea 100%);
    color: #1c1c1c;
}

.bl-head {
    height: 24px;
    display: flex;
    align-items: center;
    padding-left: 8px;
    gap: 7px;
    background: #b9c6d8;
    border-bottom: 1px solid #8b98ae;
}

.bl-close {
    margin-left: auto;
    margin-right: 5px;
    color: #8795a8;
    font-size: 13px;
}

.bl-msg {
    height: 25px;
    margin: 0 2px;
    padding-left: 9px;
    line-height: 25px;
    border-bottom: 1px solid #a9b4c5;
}

.bl-section {
    margin: 0 2px;
    padding: 6px 0 0 9px;
    height: 110px;
    border-bottom: 1px solid #a9b4c5;
    display: flex;
    flex-direction: column;
}

.bl-actions {
    border-bottom: 0;
    height: auto;
}

.bl-section h4 {
    margin: 0;
    font-size: 12px;
    line-height: 16px;
    font-weight: 700;
}

.bl-section a {
    color: #0f62c7;
}

.bl-actions h4 {
    margin-bottom: 3px;
}

.bl-actions a {
    line-height: 19px;
}

.bl-tips {
    position: relative;
    width: 436px;
    height: 66px;
    margin: 2px 0 0 -5px;
    padding: 0 5px;
    box-sizing: border-box;
    background: #fff;
    border: 1px solid #7a8494;
}

.bl-scroll {
    position: absolute;
    right: 0;
    top: 0;
    bottom: 0;
    width: 15px;
    background: #f2f2f2;
    display: flex;
    flex-direction: column;
    justify-content: space-between;
    align-items: center;
}

.bl-scroll .arrow-up,
.bl-scroll .arrow-down {
    margin: 6px 0;
    border-bottom-color: #333;
    border-top-color: #333;
}

.bl-thumb {
    width: 13px;
    height: 26px;
    box-sizing: border-box;
    border: 1px solid #9a9a9a;
    border-radius: 2px;
    background: #e4e4e4;
    display: flex;
    align-items: center;
    justify-content: center;
}

.bl-more {
    margin-top: 3px;
}

/* bottom area */
.zoombar {
    height: 17px;
    flex: none;
    display: flex;
    align-items: center;
    background: #f0f0f0;
    gap: 6px;
}

.zoom-combo {
    width: 59px;
    height: 16px;
    box-sizing: border-box;
    padding-left: 4px;
    display: flex;
    align-items: center;
    background: #fff;
    border: 1px solid #e4e4e4;
    color: #111;
}

.zoom-combo .tri {
    margin-left: auto;
    margin-right: 3px;
}

.lower {
    flex: 1;
    min-height: 0;
    margin-top: 6px;
    display: flex;
    gap: 7px;
}

.tool-col {
    display: flex;
    flex-direction: column;
    min-height: 0;
}

.watch1-col {
    width: 509px;
}

.callstack-col {
    width: 966px;
}

.right-col {
    padding-top: 7px;
}

.panel {
    flex: 1;
    min-height: 0;
    background: #fff;
    display: flex;
    flex-direction: column;
    overflow: hidden;
}

.panel-title {
    height: 20px;
    flex: none;
    box-sizing: border-box;
    padding-left: 2px;
    line-height: 20px;
    color: #fff;
    background: linear-gradient(#4e6284, #3d5478);
    display: flex;
    align-items: center;
}

.panel-btns {
    margin-left: auto;
    margin-right: 4px;
    display: flex;
    align-items: center;
    gap: 6px;
    color: #e8edf5;
    font-size: 13px;
}

.panel-btns b {
    font-weight: 400;
}

.panel-body {
    flex: 1;
    min-height: 0;
    display: flex;
}

.watch-body {
    flex: 1;
    min-width: 0;
}

.side-scroll {
    width: 17px;
    flex: none;
    background: #f0f0f0;
    display: flex;
    flex-direction: column;
    justify-content: flex-end;
}

.wt-head {
    height: 20px;
    display: flex;
    align-items: center;
    background: #eeeeee;
    border-bottom: 1px solid #a0a0a0;
    box-sizing: border-box;
}

.wt-head i {
    width: 7px;
    height: 100%;
    border-right: 1px solid #a0a0a0;
}

.wt-head span {
    margin-left: 6px;
}

.wt-row {
    height: 17px;
    box-sizing: border-box;
    border-bottom: 1px solid #a8a8a8;
    border-left: 9px solid #eeeeee;
    display: flex;
    align-items: center;
    gap: 5px;
    color: #6a7090;
    white-space: nowrap;
}

.wt-row svg {
    width: 15px;
    height: 15px;
}

.wt-exp {
    width: 18px;
    flex: none;
    margin-right: -5px;
    display: flex;
    align-items: center;
    padding-left: 3px;
    box-sizing: border-box;
}

.wt-exp i {
    width: 8px;
    height: 8px;
    background: linear-gradient(#444, #444) center / 6px 1px no-repeat, linear-gradient(#444, #444) center / 1px 6px no-repeat, #fff;
    border: 1px solid #8f8f8f;
}

.wt-empty {
    border-left: 0;
    margin-left: 8px;
    box-shadow: inset 1px 0 0 #a8a8a8;
}

.w2-grid {
    flex: 1;
    min-width: 0;
}

.w2-scroll {
    width: 19px;
    justify-content: space-between;
}

.w2-row {
    display: grid;
    grid-template-columns: 9px 444px 536px 1fr;
    box-sizing: border-box;
    border-bottom: 1px solid #a0a0a0;
}

.w2-head {
    height: 20px;
    background: #eeeeee;
    line-height: 18px;
    border-bottom-width: 2px;
}

.w2-head span {
    padding-left: 4px;
    border-left: 1px solid #c4c4c4;
}

.w2-empty {
    height: 18px;
}

.w2-empty span {
    border-left: 1px solid #a0a0a0;
}

.tool-tabs {
    flex: none;
    height: 21px;
    padding-top: 1px;
    box-sizing: border-box;
    display: flex;
    color: #eef1f6;
}

.tool-tab {
    display: flex;
    align-items: center;
    gap: 3px;
    padding: 0 4px 0 5px;
    white-space: nowrap;
}

.tool-tab svg {
    flex: none;
}

.tool-tab.active {
    background: #fff;
    color: #111;
}

.statusbar {
    flex: 1;
    display: flex;
    align-items: center;
    padding: 6px 0 0 2px;
    color: #eef1f6;
}

.st-ln {
    margin-left: auto;
    width: 92px;
}

.st-col {
    width: 92px;
}

.st-ch {
    width: 135px;
}

.st-ins {
    width: 39px;
}

.st-dot {
    width: 18px;
    height: 18px;
    margin-right: 3px;
    border-radius: 50%;
    background: #a9a9a9;
}

/* parallel stacks window */
.stacks-win {
    position: absolute;
    left: 90px;
    top: 582px;
    width: 2292px;
    height: 888px;
    box-sizing: border-box;
    border: 3px solid #35507a;
    border-top: 0;
    border-right-width: 4px;
    border-radius: 3px 3px 0 0;
    display: flex;
    flex-direction: column;
    background: #fff;
}

.win-title {
    height: 23px;
    flex: none;
    display: flex;
    align-items: center;
    padding-left: 2px;
    color: #fff;
    background: linear-gradient(#364d73 0, #4f6385 12%, #3a5175);
}

.win-max {
    width: 8px;
    height: 9px;
    border: 1px solid #e8edf5;
    border-top-width: 2px;
    box-sizing: border-box;
}

.win-tools {
    height: 26px;
    flex: none;
    display: flex;
    align-items: center;
    padding-left: 7px;
    background: #bcc7d8;
}

.win-combo {
    width: 80px;
    margin-right: 4px;
}

.win-tools .sep {
    margin: 0 3px;
}

.win-mid {
    flex: 1;
    min-height: 0;
    display: flex;
}

.canvas {
    flex: 1;
    min-width: 0;
    position: relative;
    overflow: hidden;
}

.links {
    position: absolute;
    left: 0;
    top: 0;
}

.win-vscroll {
    width: 16px;
    flex: none;
    background: #f4f4f4;
    display: flex;
    flex-direction: column;
    justify-content: space-between;
}

.win-hscroll {
    height: 17px;
    flex: none;
    display: flex;
    align-items: center;
    padding-left: 6px;
    background: #f2f2f2;
    border-top: 1px solid #dedede;
    box-sizing: border-box;
}

.h-thumb {
    width: 2088px;
    height: 14px;
    margin-left: 8px;
    box-sizing: border-box;
    border: 1px solid #b0b0b0;
    border-radius: 2px;
    background: linear-gradient(#efefef, #e4e4e4 50%, #c6c6c6 55%, #d6d6d6);
    position: relative;
}

.h-thumb i {
    position: absolute;
    left: 1043px;
    top: 3px;
    width: 7px;
    height: 7px;
    background: repeating-linear-gradient(90deg, #666 0 1px, transparent 1px 3px);
}

.win-hscroll .arrow-right {
    margin-left: 154px;
}

.corner {
    width: 13px;
    height: 14px;
    margin-left: 6px;
    box-sizing: border-box;
    border: 1px solid #9a9a9a;
    border-radius: 2px;
    background: #eee;
    display: flex;
    align-items: center;
    justify-content: center;
}

.corner i {
    width: 5px;
    height: 8px;
    background: #fff;
    border: 1px solid #3f73c9;
}

/* diagram nodes */
.node {
    position: absolute;
    box-sizing: border-box;
    font-size: 11.8px;
    background: #fff;
    border: 2px solid #1e1e1e;
    border-radius: 4px;
    overflow: hidden;
}

.node.blue {
    border: 3px solid #3399ff;
}

.node-head {
    height: 16px;
    box-sizing: border-box;
    text-align: center;
    line-height: 16px;
    background: linear-gradient(90deg, #c5e0fb, #fff);
    border-bottom: 1px solid #8a8a8a;
    white-space: nowrap;
}

.node.blue .node-head {
    height: 18px;
    line-height: 17px;
}

.node-row {
    height: 19px;
    box-sizing: border-box;
    display: flex;
    border-bottom: 1px solid #d5d5d5;
    white-space: nowrap;
    line-height: 24px;
}

.node-row:last-child {
    border-bottom: 0;
}

.node-row.ext {
    color: #808080;
}

.node-row.hl {
    background: #eeeeee;
}

.node-row.cur {
    font-weight: 700;
}

.node-mark {
    width: 21px;
    flex: none;
    border-right: 1px solid #dadada;
    box-sizing: border-box;
    display: flex;
    align-items: center;
    justify-content: center;
    background: #fff;
}

.node-row.hl .node-mark {
    background: #eeeeee;
}

.node-text {
    padding-left: 4px;
}
</style>
